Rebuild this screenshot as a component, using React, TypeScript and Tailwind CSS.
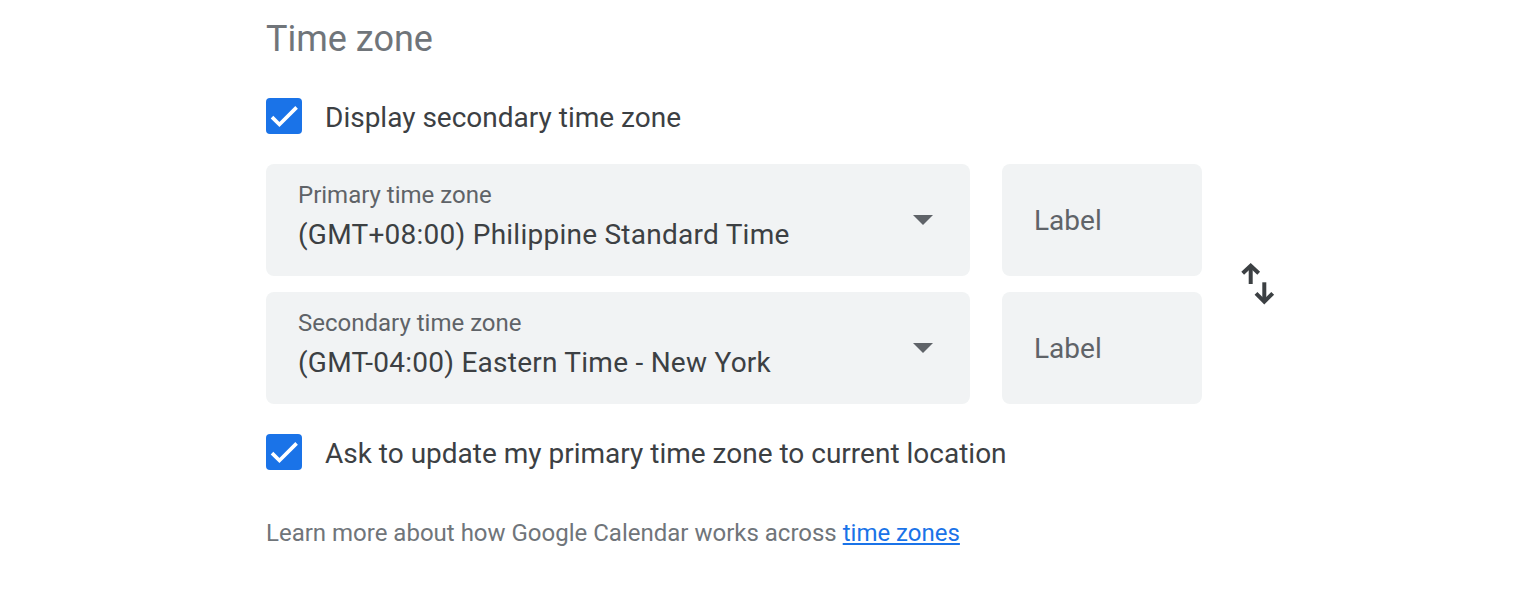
const font = { fontFamily: "Roboto, 'Liberation Sans', sans-serif" };

function Checkbox() {
  return (
    <div className="w-[36px] h-[36px] rounded-[4px] bg-[#1a73e8] shrink-0">
      <svg width="36" height="36" viewBox="0 0 36 36" fill="none">
        <path d="M6 19.1 L13.45 26.5 L30.6 9.4" stroke="#fff" strokeWidth="3.64" />
      </svg>
    </div>
  );
}

function CheckRow({ label }: { label: string }) {
  return (
    <div className="h-[36px] flex items-center gap-[23px]">
      <Checkbox />
      <span className="pt-[4px] text-[28px] leading-[36px] text-[#3c4043]">{label}</span>
    </div>
  );
}

function ZoneSelect({ label, value }: { label: string; value: string }) {
  return (
    <div className="w-[704px] h-[112px] rounded-[8px] bg-[#f1f3f4] flex items-center pl-[32px] pr-[37px]">
      <div className="flex-1 self-start pt-[15px]">
        <div className="text-[24px] leading-[32px] text-[#5f6368]">{label}</div>
        <div className="mt-[6px] text-[28px] leading-[36px] tracking-[0.25px] text-[#3c4043]">{value}</div>
      </div>
      <svg width="20" height="10" viewBox="0 0 20 10">
        <path d="M0 0 L20 0 L10 10 Z" fill="#5f6368" />
      </svg>
    </div>
  );
}

function LabelBox() {
  return (
    <div className="w-[200px] h-[112px] rounded-[8px] bg-[#f1f3f4] flex items-center pl-[32px]">
      <span className="pt-[2px] text-[28px] leading-[36px] text-[#5f6368]">Label</span>
    </div>
  );
}

export default function App() {
  return (
    <div className="w-full h-[612px] bg-white pl-[266px] pt-[17px]" style={font}>
      <h2 className="text-[36px] leading-[44px] text-[#70757a]">Time zone</h2>

      <div className="mt-[37px]">
        <CheckRow label="Display secondary time zone" />
      </div>

      <div className="mt-[30px] flex items-center">
        <div className="flex flex-col gap-[16px]">
          <div className="flex gap-[32px]">
            <ZoneSelect label="Primary time zone" value="(GMT+08:00) Philippine Standard Time" />
            <LabelBox />
          </div>
          <div className="flex gap-[32px]">
            <ZoneSelect label="Secondary time zone" value="(GMT-04:00) Eastern Time - New York" />
            <LabelBox />
          </div>
        </div>
        <svg className="ml-[38px]" width="36" height="44" viewBox="0 0 36 44" fill="none" stroke="#3c4043" strokeWidth="4">
          <path d="M2.7 11.3 L10.7 3.7 L18.7 11.3" />
          <path d="M10.7 4 V22" />
          <path d="M16 31.3 L24.3 39.7 L32.7 31.3" />
          <path d="M24.3 20.3 V39" />
        </svg>
      </div>

      <div className="mt-[30px]">
        <CheckRow label="Ask to update my primary time zone to current location" />
      </div>

      <p className="mt-[47px] text-[24px] leading-[32px] text-[#70757a]">
        Learn more about how Google Calendar works across{" "}
        <a href="#" className="text-[#1a73e8] underline">time zones</a>
      </p>
    </div>
  );
}
